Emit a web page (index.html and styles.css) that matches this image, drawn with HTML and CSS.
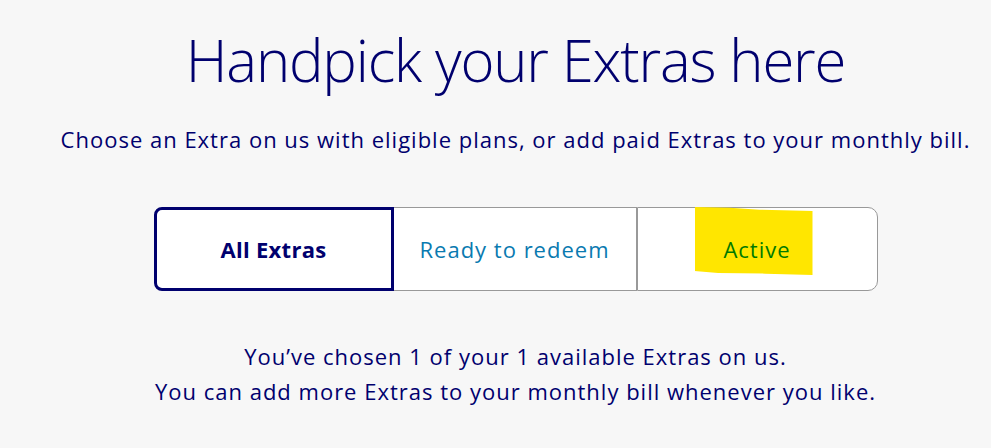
FILE: index.html
```html
<!DOCTYPE html>
<html lang="en">
<head>
<meta charset="utf-8">
<title>Handpick your Extras</title>
<link rel="stylesheet" href="styles.css">
</head>
<body>
<main class="page">
  <h1 class="title">Handpick your Extras here</h1>
  <p class="intro">Choose an Extra on us with eligible plans, or add paid Extras to your monthly bill.</p>
  <div class="tabs">
    <button class="tab tab-selected">All Extras</button>
    <button class="tab tab-redeem">Ready to redeem</button>
    <button class="tab tab-active"><span class="highlight"></span><span class="tab-label">Active</span></button>
  </div>
  <p class="summary">You’ve chosen 1 of your 1 available Extras on us.<br>You can add more Extras to your monthly bill whenever you like.</p>
</main>
</body>
</html>
```
FILE: styles.css
```css
html, body {
  margin: 0;
  padding: 0;
  background: #f7f7f7;
}
body {
  font-family: "Open Sans", "Noto Sans", sans-serif;
  color: #000066;
  width: 991px;
  height: 448px;
  overflow: hidden;
}
.page {
  padding: 0 0 0 40px;
  display: flex;
  flex-direction: column;
  align-items: center;
}
.title {
  margin: 22px 0 0;
  font-weight: 350;
  font-size: 58px;
  line-height: 76px;
  letter-spacing: -1.15px;
  color: #00006e;
}
.intro {
  margin: 26px 0 0;
  font-size: 22px;
  line-height: 30px;
  letter-spacing: 1px;
  color: #00006e;
}
.tabs {
  margin-top: 53px;
  width: 724px;
  height: 84px;
  display: grid;
  grid-template-columns: 240px 243px 241px;
  box-sizing: border-box;
}
.tab {
  font-family: inherit;
  font-size: 22px;
  letter-spacing: 1px;
  background: #fff;
  border: 1px solid #999;
  border-left: none;
  margin: 0;
  padding: 0;
  position: relative;
  display: flex;
  align-items: center;
  justify-content: center;
  cursor: pointer;
}
.tab-selected {
  border: 3px solid #00006e;
  border-radius: 8px 0 0 8px;
  font-weight: 700;
  letter-spacing: 0.3px;
  color: #00006e;
}
.tab-redeem {
  color: #0a7ab0;
  border-right: 1px solid #999;
}
.tab-active {
  color: #007a00;
  border-radius: 0 10px 10px 0;
  border-left: 1px solid #999;
}
.highlight {
  position: absolute;
  left: 57px;
  top: -1px;
  width: 118px;
  height: 68px;
  background: #ffe600;
  clip-path: polygon(0 0, 30% 1%, 55% 4%, 100% 6%, 100% 100%, 60% 98%, 20% 97%, 0 94%);
}
.tab-label {
  position: relative;
}
.summary {
  margin: 48px 0 0;
  font-size: 22px;
  line-height: 35px;
  letter-spacing: 1px;
  text-align: center;
  color: #00006e;
}
```
